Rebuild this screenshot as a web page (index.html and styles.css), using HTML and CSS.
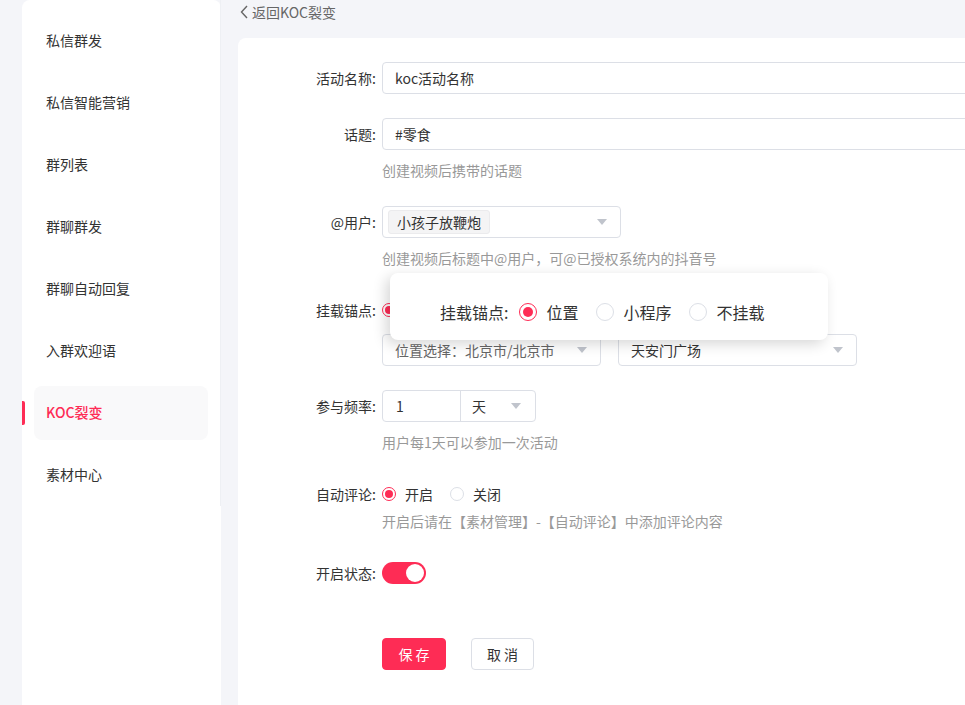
FILE: index.html
```html
<!DOCTYPE html>
<html lang="zh-CN">
<head>
  <meta charset="UTF-8">
  <title>KOC裂变</title>
  <link rel="stylesheet" href="styles.css">
</head>
<body>
  <div class="layout">
    <aside class="sidebar">
      <ul class="menu">
        <li class="menu-item">私信群发</li>
        <li class="menu-item">私信智能营销</li>
        <li class="menu-item">群列表</li>
        <li class="menu-item">群聊群发</li>
        <li class="menu-item">群聊自动回复</li>
        <li class="menu-item">入群欢迎语</li>
        <li class="menu-item active">KOC裂变</li>
        <li class="menu-item">素材中心</li>
      </ul>
    </aside>

    <main class="main">
      <a class="back">
        <svg width="9" height="14" viewBox="0 0 9 14"><path d="M7 1 L1.5 7 L7 13" fill="none" stroke="#666" stroke-width="1.4"/></svg>
        返回KOC裂变
      </a>

      <div class="card">
        <div class="form">
          <div class="form-item">
            <label class="form-label">活动名称:</label>
            <div class="form-content">
              <div class="input wide">koc活动名称</div>
            </div>
          </div>

          <div class="form-item">
            <label class="form-label">话题:</label>
            <div class="form-content">
              <div class="input wide">#零食</div>
              <div class="help">创建视频后携带的话题</div>
            </div>
          </div>

          <div class="form-item">
            <label class="form-label">@用户:</label>
            <div class="form-content">
              <div class="select user-select">
                <span class="tag">小孩子放鞭炮</span>
                <span class="caret"></span>
              </div>
              <div class="help">创建视频后标题中@用户，可@已授权系统内的抖音号</div>
            </div>
          </div>

          <div class="form-item">
            <label class="form-label">挂载锚点:</label>
            <div class="form-content">
              <div class="radio-group">
                <span class="radio checked"><span class="radio-dot"></span>位置</span>
                <span class="radio"><span class="radio-dot"></span>小程序</span>
                <span class="radio"><span class="radio-dot"></span>不挂载</span>
              </div>
              <div class="select-row">
                <div class="select loc-select">
                  <span class="muted">位置选择：北京市/北京市</span>
                  <span class="caret"></span>
                </div>
                <div class="select poi-select">
                  <span>天安门广场</span>
                  <span class="caret"></span>
                </div>
              </div>
            </div>
          </div>

          <div class="form-item">
            <label class="form-label">参与频率:</label>
            <div class="form-content">
              <div class="input-group">
                <span class="group-input">1</span>
                <span class="group-select">天<span class="caret"></span></span>
              </div>
              <div class="help">用户每1天可以参加一次活动</div>
            </div>
          </div>

          <div class="form-item">
            <label class="form-label">自动评论:</label>
            <div class="form-content">
              <div class="radio-group">
                <span class="radio checked"><span class="radio-dot"></span>开启</span>
                <span class="radio"><span class="radio-dot"></span>关闭</span>
              </div>
              <div class="help tight">开启后请在【素材管理】-【自动评论】中添加评论内容</div>
            </div>
          </div>

          <div class="form-item">
            <label class="form-label">开启状态:</label>
            <div class="form-content">
              <div class="switch-row">
                <span class="switch"><span class="switch-knob"></span></span>
              </div>
            </div>
          </div>

          <div class="actions">
            <button class="btn btn-primary">保 存</button>
            <button class="btn">取 消</button>
          </div>
        </div>

        <div class="popover">
          <span class="popover-label">挂载锚点:</span>
          <span class="radio big checked"><span class="radio-dot"></span>位置</span>
          <span class="radio big"><span class="radio-dot"></span>小程序</span>
          <span class="radio big"><span class="radio-dot"></span>不挂载</span>
        </div>
      </div>
    </main>
  </div>
</body>
</html>
```

FILE: styles.css
```css
html, body {
  margin: 0;
  height: 100%;
  overflow: hidden;
}
body {
  font-family: "Noto Sans CJK SC", "Noto Sans", sans-serif;
  font-size: 14px;
  color: #333;
  background: #f4f5f9;
}
.layout {
  display: flex;
  height: 100vh;
  padding-left: 22px;
  gap: 17px;
}
.sidebar {
  flex: 0 0 199px;
  background: #fff;
  border-radius: 8px 8px 0 0;
}
.menu {
  list-style: none;
  margin: 0;
  padding: 14px 12px 4px;
  display: flex;
  flex-direction: column;
  gap: 8px;
  border-right: 1px solid #eef0f4;
}
.menu-item {
  position: relative;
  height: 54px;
  line-height: 53px;
  padding-left: 12px;
  border-radius: 8px;
  color: #333;
}
.menu-item.active {
  background: #f9f9fa;
  color: #fe2c55;
  font-weight: 500;
}
.menu-item.active::before {
  content: "";
  position: absolute;
  left: -12px;
  top: 15px;
  width: 3px;
  height: 24px;
  background: #fe2c55;
  border-radius: 0 2px 2px 0;
}
.main {
  flex: 0 0 800px;
  display: flex;
  flex-direction: column;
}
.back {
  display: flex;
  align-items: center;
  gap: 3px;
  height: 24px;
  padding-left: 2px;
  margin-bottom: 14px;
  color: #666;
}
.card {
  position: relative;
  flex: 1;
  background: #fff;
  border-radius: 8px 0 0 0;
  padding-top: 24px;
}
.form-item {
  display: grid;
  grid-template-columns: 138px 1fr;
  column-gap: 6px;
  margin-bottom: 24px;
}
.form-label {
  text-align: right;
  line-height: 32px;
  color: #333;
}
.input {
  height: 32px;
  box-sizing: border-box;
  border: 1px solid #dcdfe6;
  border-radius: 4px;
  padding: 0 12px;
  line-height: 30px;
}
.input.wide {
  width: 640px;
}
.help {
  margin: 10px 0 2px;
  line-height: 20px;
  color: #999;
}
.help.tight {
  margin-top: 1px;
}
.select {
  height: 32px;
  box-sizing: border-box;
  border: 1px solid #dcdfe6;
  border-radius: 4px;
  padding: 0 13px 0 12px;
  display: flex;
  align-items: center;
  justify-content: space-between;
}
.user-select {
  width: 239px;
  padding-left: 5px;
}
.loc-select {
  width: 219px;
}
.poi-select {
  width: 239px;
}
.muted {
  color: #666;
}
.caret {
  width: 0;
  height: 0;
  border-left: 5px solid transparent;
  border-right: 5px solid transparent;
  border-top: 6px solid #c0c4cc;
}
.tag {
  height: 22px;
  line-height: 22px;
  padding: 0 8px;
  background: #f4f4f5;
  border: 1px solid #ebebed;
  border-radius: 3px;
  color: #333;
}
.select-row {
  display: flex;
  gap: 17px;
  margin-top: 8px;
}
.radio-group {
  display: flex;
  align-items: center;
  gap: 17px;
  height: 32px;
}
.radio {
  display: flex;
  align-items: center;
  gap: 9px;
  color: #333;
}
.radio-dot {
  width: 14px;
  height: 14px;
  box-sizing: border-box;
  border: 1px solid #dcdfe6;
  border-radius: 50%;
  display: flex;
  align-items: center;
  justify-content: center;
}
.radio.checked .radio-dot {
  border-color: #fe2c55;
}
.radio.checked .radio-dot::after {
  content: "";
  width: 8px;
  height: 8px;
  border-radius: 50%;
  background: #fe2c55;
}
.input-group {
  display: flex;
  width: 154px;
  height: 32px;
  box-sizing: border-box;
  border: 1px solid #dcdfe6;
  border-radius: 4px;
}
.group-input {
  width: 78px;
  padding-left: 13px;
  line-height: 30px;
  border-right: 1px solid #dcdfe6;
  box-sizing: border-box;
}
.group-select {
  flex: 1;
  display: flex;
  align-items: center;
  justify-content: space-between;
  padding: 0 14px 0 11px;
}
.switch-row {
  height: 32px;
  display: flex;
  align-items: center;
}
.switch {
  width: 44px;
  height: 22px;
  border-radius: 11px;
  background: #fe2c55;
  display: flex;
  align-items: center;
  justify-content: flex-end;
  padding-right: 2px;
  box-sizing: border-box;
}
.switch-knob {
  width: 18px;
  height: 18px;
  border-radius: 50%;
  background: #fff;
}
.actions {
  display: flex;
  gap: 25px;
  padding-left: 144px;
  margin-top: 49px;
}
.btn {
  height: 32px;
  width: 63px;
  border: 1px solid #dcdfe6;
  border-radius: 4px;
  background: #fff;
  color: #333;
  font-family: inherit;
  font-size: 14px;
  padding: 0;
}
.btn-primary {
  width: 64px;
  background: #fe2c55;
  border-color: #fe2c55;
  color: #fff;
}
.popover {
  position: absolute;
  left: 152px;
  top: 235px;
  width: 438px;
  height: 67px;
  box-sizing: border-box;
  padding: 10px 0 0 50px;
  background: #fff;
  border-radius: 8px;
  box-shadow: -4px 4px 14px rgba(0, 0, 0, 0.16);
  display: flex;
  align-items: center;
  gap: 18px;
  font-size: 16px;
}
.popover-label {
  margin-right: -7px;
}
.radio.big {
  gap: 9px;
}
.radio.big .radio-dot {
  width: 18px;
  height: 18px;
}
.radio.big.checked .radio-dot::after {
  width: 10px;
  height: 10px;
}
```
